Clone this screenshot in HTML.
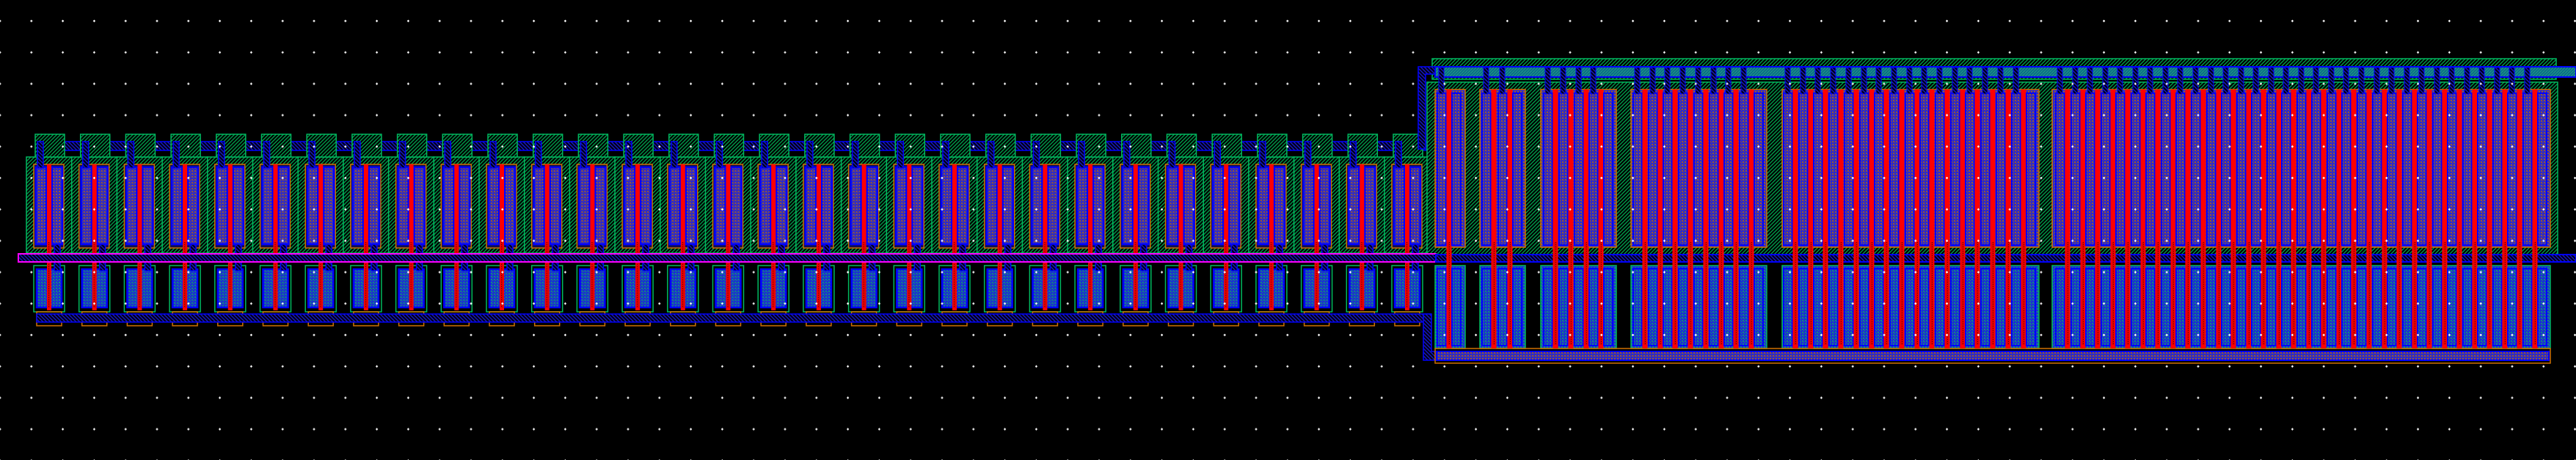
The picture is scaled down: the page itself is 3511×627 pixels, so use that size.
<!DOCTYPE html>
<html><head><meta charset="utf-8"><style>html,body{margin:0;padding:0;background:#000;overflow:hidden}svg{display:block}</style></head>
<body>
<svg width="3511" height="627" viewBox="0 0 3511 627" xmlns="http://www.w3.org/2000/svg">
<defs>
<pattern id="hg" width="5" height="5" patternUnits="userSpaceOnUse"><rect width="5" height="5" fill="#000"/><path d="M-1,6 L6,-1 M-1,1 L1,-1 M4,6 L6,4" stroke="#00a850" stroke-width="1.3"/></pattern>
<pattern id="hb" width="5" height="5" patternUnits="userSpaceOnUse"><rect width="5" height="5" fill="#000018"/><path d="M-1,-1 L6,6 M4,-1 L6,1 M-1,4 L1,6" stroke="#1a1ad0" stroke-width="1.3"/></pattern>
<pattern id="pd" width="4" height="4" patternUnits="userSpaceOnUse"><rect width="4" height="4" fill="#2828d0"/><rect x="0" y="0" width="2" height="2" fill="#9a5a30"/><rect x="2" y="2" width="1" height="1" fill="#8a5040"/></pattern>
<pattern id="nd" width="4" height="4" patternUnits="userSpaceOnUse"><rect width="4" height="4" fill="#1a2ad8"/><rect x="0" y="0" width="2" height="2" fill="#10907a"/><rect x="2" y="2" width="1" height="1" fill="#20a060"/></pattern>
<pattern id="tl" width="4" height="4" patternUnits="userSpaceOnUse"><rect width="4" height="4" fill="#0a6a8a"/><path d="M0,4 L4,0" stroke="#20a080" stroke-width="1"/></pattern>
<pattern id="rd" width="3" height="3" patternUnits="userSpaceOnUse"><rect width="3" height="3" fill="#e00000"/><rect width="1" height="1" fill="#600000"/></pattern>
<pattern id="dots" x="-1.5" y="27" width="42.8" height="42.8" patternUnits="userSpaceOnUse"><rect x="0" y="1" width="3" height="1.2" fill="#fff"/><rect x="0.9" y="0" width="1.2" height="3.2" fill="#fff"/></pattern>

<g id="cell">
  <rect x="0" y="214" width="62" height="131" fill="url(#hg)" stroke="#00b860" stroke-width="1.5"/>
  <rect x="12" y="183" width="40" height="31" fill="url(#hg)" stroke="#00b860" stroke-width="1.5"/>
  <rect x="10" y="224" width="41" height="114" fill="#101050" stroke="#d07000" stroke-width="1.5"/>
  <rect x="13" y="228" width="14" height="105" fill="url(#pd)" stroke="#0000ff" stroke-width="2.5"/>
  <rect x="35" y="228" width="14" height="105" fill="url(#pd)" stroke="#0000ff" stroke-width="2.5"/>
  <rect x="15" y="193" width="8" height="36" fill="url(#hb)" stroke="#0000ff" stroke-width="1.5"/>
  <rect x="10" y="362" width="42" height="63" fill="#000" stroke="#00b860" stroke-width="1.5"/>
  <rect x="14" y="367" width="34" height="52" fill="url(#nd)" stroke="#0000ff" stroke-width="2.5"/>
  <rect x="38" y="333" width="8" height="36" fill="url(#hb)" stroke="#0000ff" stroke-width="1.5"/>
  <rect x="14" y="425" width="34" height="19" fill="none" stroke="#d07000" stroke-width="1.5"/>
  <rect x="18" y="429" width="24" height="10" fill="url(#pd)"/>
  <rect x="28" y="224" width="6" height="199" fill="#ff0000"/>
  <rect x="29" y="330" width="4" height="90" fill="url(#rd)"/>
</g>

<g id="fg">
  <rect x="-16" y="127" width="12" height="207" fill="url(#pd)" stroke="#0000ff" stroke-width="2"/>
  <rect x="-16" y="366" width="12" height="105" fill="url(#nd)" stroke="#0000ff" stroke-width="2"/>
  <rect x="-14" y="92" width="7" height="36" fill="url(#hb)" stroke="#0000ff" stroke-width="1"/>
  <rect x="-3.5" y="122" width="7" height="353" fill="#ff0000"/>
  <rect x="-2" y="330" width="4" height="140" fill="url(#rd)"/>
</g>
<g id="fe">
  <rect x="-16" y="127" width="12" height="207" fill="url(#pd)" stroke="#0000ff" stroke-width="2"/>
  <rect x="-16" y="366" width="12" height="105" fill="url(#nd)" stroke="#0000ff" stroke-width="2"/>
</g>
</defs>

<rect width="3511" height="627" fill="#000"/>

<rect x="50" y="193" width="1895" height="12" fill="url(#hb)" stroke="#0000ff" stroke-width="1.5"/>

<use href="#cell" x="36"/><use href="#cell" x="97.7"/><use href="#cell" x="159.4"/><use href="#cell" x="221.1"/><use href="#cell" x="282.8"/><use href="#cell" x="344.5"/><use href="#cell" x="406.2"/><use href="#cell" x="467.9"/><use href="#cell" x="529.6"/><use href="#cell" x="591.3"/><use href="#cell" x="653"/><use href="#cell" x="714.7"/><use href="#cell" x="776.4"/><use href="#cell" x="838.1"/><use href="#cell" x="899.8"/><use href="#cell" x="961.5"/><use href="#cell" x="1023.2"/><use href="#cell" x="1084.9"/><use href="#cell" x="1146.6"/><use href="#cell" x="1208.3"/><use href="#cell" x="1270"/><use href="#cell" x="1331.7"/><use href="#cell" x="1393.4"/><use href="#cell" x="1455.1"/><use href="#cell" x="1516.8"/><use href="#cell" x="1578.5"/><use href="#cell" x="1640.2"/><use href="#cell" x="1701.9"/><use href="#cell" x="1763.6"/><use href="#cell" x="1825.3"/><use href="#cell" x="1887"/>

<rect x="1952" y="80" width="1532" height="28" fill="url(#hg)" stroke="#00b860" stroke-width="1.5"/>
<rect x="1945" y="112" width="1541" height="235" fill="url(#hg)" stroke="#00b860" stroke-width="1.5"/>
<rect x="1956" y="91" width="1555" height="14" fill="url(#tl)" stroke="#0000ff" stroke-width="2"/>

<g fill="url(#pd)" stroke="#d07000" stroke-width="1.5">
<rect x="1956" y="122" width="41" height="215"/>
<rect x="2017" y="122" width="62" height="215"/>
<rect x="2100" y="122" width="103" height="215"/>
<rect x="2223" y="122" width="185" height="215"/>
<rect x="2429" y="122" width="350" height="215"/>
<rect x="2797" y="122" width="679" height="215"/>
</g>
<g fill="url(#nd)" stroke="#00b860" stroke-width="1.5">
<rect x="1956" y="362" width="41" height="113"/>
<rect x="2017" y="362" width="62" height="113"/>
<rect x="2100" y="362" width="103" height="113"/>
<rect x="2223" y="362" width="185" height="113"/>
<rect x="2429" y="362" width="350" height="113"/>
<rect x="2797" y="362" width="679" height="113"/>
</g>

<rect x="25" y="346" width="1932" height="11" fill="url(#hb)" stroke="#ff00ff" stroke-width="2"/>
<rect x="1957" y="347" width="1554" height="10" fill="url(#hb)" stroke="#0000ff" stroke-width="2"/>
<rect x="50" y="428" width="1900" height="11" fill="url(#hb)" stroke="#0000ff" stroke-width="1.5"/>
<path d="M1933,203 L1933,91 L1956,91 L1956,101 L1943,101 L1943,203 Z" fill="url(#hb)" stroke="#0000ff" stroke-width="1.5"/>
<path d="M1940,428 L1951,428 L1951,479 L1960,479 L1960,491 L1940,491 Z" fill="url(#hb)" stroke="#0000ff" stroke-width="1.5"/>
<rect x="1956" y="475" width="1520" height="20" fill="none" stroke="#d07000" stroke-width="1.5"/>
<rect x="1958" y="479" width="1516" height="12" fill="url(#pd)" stroke="#0000ff" stroke-width="2"/>

<use href="#fg" x="1975"/><use href="#fe" x="1995"/>
<use href="#fg" x="2036"/><use href="#fg" x="2058"/><use href="#fe" x="2078"/>
<use href="#fg" x="2120"/><use href="#fg" x="2141"/><use href="#fg" x="2162"/><use href="#fg" x="2182"/><use href="#fe" x="2202"/>
<use href="#fg" x="2242"/><use href="#fg" x="2263"/><use href="#fg" x="2283"/><use href="#fg" x="2304"/><use href="#fg" x="2325"/><use href="#fg" x="2346"/><use href="#fg" x="2366"/><use href="#fg" x="2387"/><use href="#fe" x="2407"/>
<use href="#fg" x="2447"/><use href="#fg" x="2468"/><use href="#fg" x="2488"/><use href="#fg" x="2509"/><use href="#fg" x="2530"/><use href="#fg" x="2551"/><use href="#fg" x="2571"/><use href="#fg" x="2592"/><use href="#fg" x="2613"/><use href="#fg" x="2633"/><use href="#fg" x="2654"/><use href="#fg" x="2675"/><use href="#fg" x="2695"/><use href="#fg" x="2716"/><use href="#fg" x="2737"/><use href="#fg" x="2758"/><use href="#fe" x="2778"/>
<use href="#fg" x="2818"/><use href="#fg" x="2839"/><use href="#fg" x="2859"/><use href="#fg" x="2880"/><use href="#fg" x="2900"/><use href="#fg" x="2921"/><use href="#fg" x="2941"/><use href="#fg" x="2962"/><use href="#fg" x="2982"/><use href="#fg" x="3003"/><use href="#fg" x="3024"/><use href="#fg" x="3044"/><use href="#fg" x="3065"/><use href="#fg" x="3085"/><use href="#fg" x="3106"/><use href="#fg" x="3126"/><use href="#fg" x="3147"/><use href="#fg" x="3167"/><use href="#fg" x="3188"/><use href="#fg" x="3208"/><use href="#fg" x="3229"/><use href="#fg" x="3250"/><use href="#fg" x="3270"/><use href="#fg" x="3291"/><use href="#fg" x="3311"/><use href="#fg" x="3332"/><use href="#fg" x="3352"/><use href="#fg" x="3373"/><use href="#fg" x="3393"/><use href="#fg" x="3414"/><use href="#fg" x="3434"/><use href="#fg" x="3455"/><use href="#fe" x="3475"/>

<rect width="3511" height="627" fill="url(#dots)"/>
</svg>
</body></html>
